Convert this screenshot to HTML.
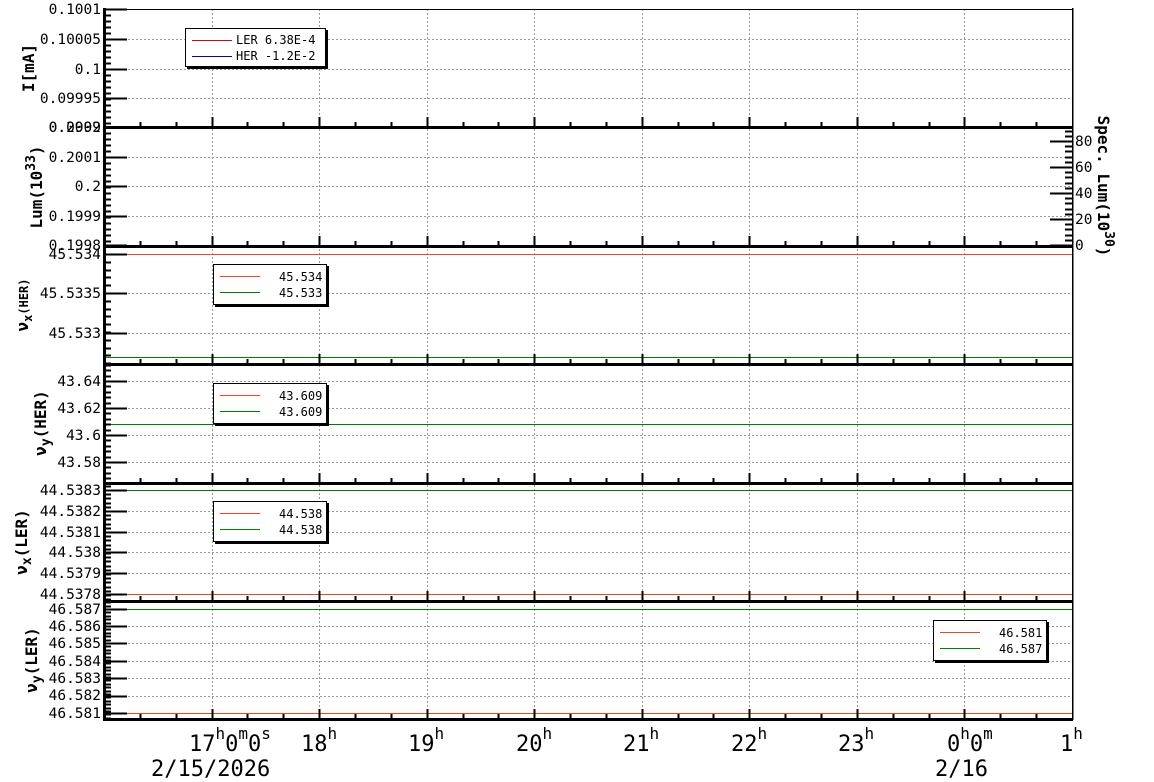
<!DOCTYPE html>
<html><head><meta charset="utf-8">
<style>
html,body{margin:0;padding:0;background:#fff;width:1154px;height:782px;overflow:hidden}
svg text{font-family:"DejaVu Sans Mono","Liberation Mono",monospace;fill:#000}
svg line,svg rect{shape-rendering:crispEdges}
.t{font-size:14.5px}
.lg{font-size:12px}
.ax{font-size:16px;font-weight:bold}
.xl{font-size:22px}
.sp{font-size:16px}
</style></head><body>
<svg id="s" width="1154" height="782" xmlns="http://www.w3.org/2000/svg">
<g id="grid"></g>
<g stroke-width="1">
<line x1="104" y1="254.5" x2="1072" y2="254.5" stroke="#ff4020"/>
<line x1="104" y1="357.5" x2="1072" y2="357.5" stroke="#008000"/>
<line x1="104" y1="424.5" x2="1072" y2="424.5" stroke="#008000"/>
<line x1="104" y1="490.5" x2="1072" y2="490.5" stroke="#008000"/>
<line x1="104" y1="594.5" x2="1072" y2="594.5" stroke="#ff4020"/>
<line x1="104" y1="609.5" x2="1072" y2="609.5" stroke="#008000"/>
<line x1="104" y1="713.5" x2="1072" y2="713.5" stroke="#ff4020"/>
</g>
<g id="ticks"></g>

<g>
<rect x="187" y="30" width="141" height="39" fill="#000"/>
<rect x="185.5" y="28.5" width="140" height="38" fill="#fff" stroke="#000" stroke-width="1"/>
<line x1="192" y1="40.5" x2="232" y2="40.5" stroke="#e00000"/>
<line x1="192" y1="56.5" x2="232" y2="56.5" stroke="#0000d0"/>
<text class="lg" x="236" y="44">LER  6.38E-4</text>
<text class="lg" x="236" y="60">HER  -1.2E-2</text>
</g>
<g>
<rect x="215" y="266" width="114" height="41" fill="#000"/>
<rect x="213.5" y="264.5" width="113" height="40" fill="#fff" stroke="#000" stroke-width="1"/>
<line x1="220" y1="276.5" x2="260" y2="276.5" stroke="#ff4020"/>
<line x1="220" y1="292.5" x2="260" y2="292.5" stroke="#008000"/>
<text class="lg" x="279" y="281">45.534</text>
<text class="lg" x="279" y="297">45.533</text>
</g>
<g>
<rect x="215" y="385" width="114" height="41" fill="#000"/>
<rect x="213.5" y="383.5" width="113" height="40" fill="#fff" stroke="#000" stroke-width="1"/>
<line x1="220" y1="395.5" x2="260" y2="395.5" stroke="#ff4020"/>
<line x1="220" y1="411.5" x2="260" y2="411.5" stroke="#008000"/>
<text class="lg" x="279" y="400">43.609</text>
<text class="lg" x="279" y="416">43.609</text>
</g>
<g>
<rect x="215" y="503" width="114" height="41" fill="#000"/>
<rect x="213.5" y="501.5" width="113" height="40" fill="#fff" stroke="#000" stroke-width="1"/>
<line x1="220" y1="513.5" x2="260" y2="513.5" stroke="#ff4020"/>
<line x1="220" y1="529.5" x2="260" y2="529.5" stroke="#008000"/>
<text class="lg" x="279" y="518">44.538</text>
<text class="lg" x="279" y="534">44.538</text>
</g>
<g>
<rect x="935" y="622" width="114" height="41" fill="#000"/>
<rect x="933.5" y="620.5" width="113" height="40" fill="#fff" stroke="#000" stroke-width="1"/>
<line x1="940" y1="632.5" x2="980" y2="632.5" stroke="#ff4020"/>
<line x1="940" y1="648.5" x2="980" y2="648.5" stroke="#008000"/>
<text class="lg" x="999" y="637">46.581</text>
<text class="lg" x="999" y="653">46.587</text>
</g>

<g class="t" text-anchor="end">
<text x="101" y="14">0.1001</text>
<text x="101" y="44">0.10005</text>
<text x="101" y="74">0.1</text>
<text x="101" y="103">0.09995</text>
<text x="101" y="132">0.0999</text>
<text x="101" y="132">0.2002</text>
<text x="101" y="162">0.2001</text>
<text x="101" y="191">0.2</text>
<text x="101" y="221">0.1999</text>
<text x="101" y="250">0.1998</text>
<text x="101" y="259">45.534</text>
<text x="101" y="298">45.5335</text>
<text x="101" y="338">45.533</text>
<text x="101" y="386">43.64</text>
<text x="101" y="413">43.62</text>
<text x="101" y="440">43.6</text>
<text x="101" y="467">43.58</text>
<text x="101" y="495">44.5383</text>
<text x="101" y="516">44.5382</text>
<text x="101" y="537">44.5381</text>
<text x="101" y="557">44.538</text>
<text x="101" y="578">44.5379</text>
<text x="101" y="599">44.5378</text>
<text x="101" y="614">46.587</text>
<text x="101" y="631">46.586</text>
<text x="101" y="648">46.585</text>
<text x="101" y="666">46.584</text>
<text x="101" y="683">46.583</text>
<text x="101" y="700">46.582</text>
<text x="101" y="718">46.581</text>
</g>
<g class="t">
<text x="1075" y="146">80</text>
<text x="1075" y="172">60</text>
<text x="1075" y="198">40</text>
<text x="1075" y="224">20</text>
<text x="1075" y="250">0</text>
</g>

<text class="ax" transform="translate(34,68) rotate(-90)" text-anchor="middle">I[mA]</text>
<text class="ax" transform="translate(42,187) rotate(-90)" text-anchor="middle">Lum(10<tspan dy="-7" font-size="13">33</tspan><tspan dy="7">)</tspan></text>
<text class="ax" transform="translate(28,305) rotate(-90)" text-anchor="middle">ν<tspan dy="4" font-size="12">x</tspan><tspan dy="-4" font-size="12">(HER)</tspan></text>
<text class="ax" transform="translate(46,423) rotate(-90)" text-anchor="middle">ν<tspan dy="4" font-size="13">y</tspan><tspan dy="-4">(HER)</tspan></text>
<text class="ax" transform="translate(27,542) rotate(-90)" text-anchor="middle">ν<tspan dy="4" font-size="13">x</tspan><tspan dy="-4">(LER)</tspan></text>
<text class="ax" transform="translate(37,660) rotate(-90)" text-anchor="middle">ν<tspan dy="4" font-size="13">y</tspan><tspan dy="-4">(LER)</tspan></text>
<text class="ax" transform="translate(1098,186) rotate(90)" text-anchor="middle">Spec. Lum(10<tspan dy="-7" font-size="13">30</tspan><tspan dy="7">)</tspan></text>

<g class="xl">
<text x="189" y="751">17<tspan class="sp" dy="-12">h</tspan><tspan dy="12">0</tspan><tspan class="sp" dy="-12">m</tspan><tspan dy="12">0</tspan><tspan class="sp" dy="-12">s</tspan></text>
<text x="301" y="751">18<tspan class="sp" dy="-12">h</tspan></text>
<text x="408" y="751">19<tspan class="sp" dy="-12">h</tspan></text>
<text x="516" y="751">20<tspan class="sp" dy="-12">h</tspan></text>
<text x="623" y="751">21<tspan class="sp" dy="-12">h</tspan></text>
<text x="731" y="751">22<tspan class="sp" dy="-12">h</tspan></text>
<text x="838" y="751">23<tspan class="sp" dy="-12">h</tspan></text>
<text x="947" y="751">0<tspan class="sp" dy="-12">h</tspan><tspan dy="12">0</tspan><tspan class="sp" dy="-12">m</tspan></text>
<text x="1060" y="751">1<tspan class="sp" dy="-12">h</tspan></text>
<text x="151" y="776">2/15/2026</text>
<text x="935" y="776">2/16</text>
</g>
</svg>
<script>
(function(){
var NS="http://www.w3.org/2000/svg";
var g=document.getElementById('grid'),t=document.getElementById('ticks');
function L(p,x1,y1,x2,y2,c,w,d){var l=document.createElementNS(NS,'line');l.setAttribute('x1',x1);l.setAttribute('y1',y1);l.setAttribute('x2',x2);l.setAttribute('y2',y2);l.setAttribute('stroke',c);l.setAttribute('stroke-width',w);if(d)l.setAttribute('stroke-dasharray',d);p.appendChild(l);}
var X0=104,X1=1072,hs=107.55,tops=[9,127,246,364,483,601],bot=719;
var hx=[];for(var i=1;i<=9;i++)hx.push(Math.round(X0+hs*i)+0.5);
for(var i=0;i<8;i++)L(g,hx[i],9,hx[i],bot,'#999',1,'2,2');
var maj=[[39,69,98],[157,186,216],[293,333],[381,408,435,462],[511,532,552,573],[626,643,661,678,696]];
maj.forEach(function(a){a.forEach(function(y){L(g,X0,y+0.5,X1,y+0.5,'#999',1,'2,2');});});
var majT=[[9,39,69,98,127],[127,157,186,216,245],[254,293,333],[381,408,435,462],[490,511,532,552,573,594],[609,626,643,661,678,696,713]];
for(var p=0;p<6;p++){
 var top=tops[p],b=(p<5?tops[p+1]:bot);
 var m=majT[p],step=(m[1]-m[0])/5;
 var y=m[0];while(y-step>top)y-=step;
 for(;y<b;y+=step)L(t,X0,Math.round(y)+0.5,X0+7,Math.round(y)+0.5,'#000',2);
 m.forEach(function(yy){L(t,X0,yy+0.5,X0+23,yy+0.5,'#000',2);});
 for(var k=1;k<27;k++){var x=Math.round(X0+hs/3*k)+0.5;var mj=(k%3==0);L(t,x,b,x,b-(mj?10:5),'#000',2);}
 L(t,X0-1,b+0.5,X1+1,b+0.5,'#000',3);
}
L(t,X0-1,9.5,X1+1,9.5,'#000',1);
L(t,X0+0.5,8,X0+0.5,bot+1,'#000',3);
L(t,X1+0.5,8,X1+0.5,bot+1,'#000',1.5);
var rm=[245,219,193,167,141];
rm.forEach(function(yy){L(t,X1,yy+0.5,X1-22,yy+0.5,'#000',2);});
for(var y=245;y>130;y-=5.2)L(t,X1,Math.round(y)+0.5,X1-7,Math.round(y)+0.5,'#000',2);
})();
</script>
</body></html>
